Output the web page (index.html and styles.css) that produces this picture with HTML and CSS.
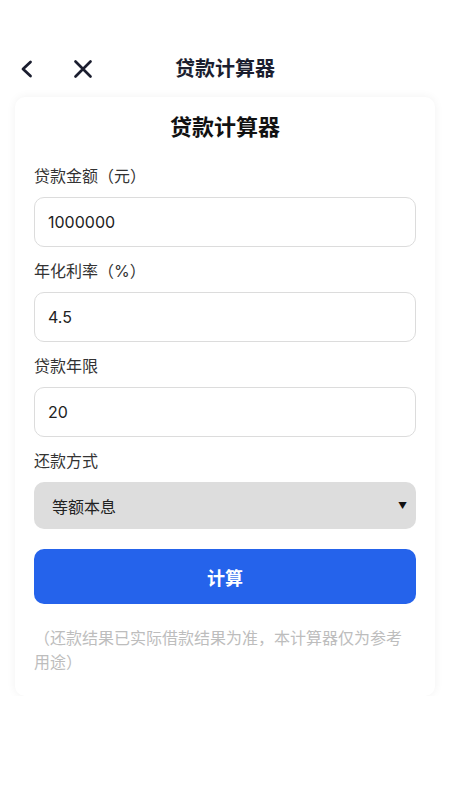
FILE: index.html
```html
<!DOCTYPE html>
<html lang="zh-CN">
<head>
<meta charset="utf-8">
<meta name="viewport" content="width=device-width, initial-scale=1">
<title>贷款计算器</title>
<link rel="stylesheet" href="styles.css">
</head>
<body>
<header class="topbar">
  <div class="nav-icons">
    <svg class="icon-back" width="16" height="20" viewBox="0 0 16 20" aria-hidden="true"><path d="M12.5 3 L5 10 L12.5 17" fill="none" stroke="currentColor" stroke-width="2.8" stroke-linecap="round" stroke-linejoin="round"/></svg>
    <svg class="icon-close" width="20" height="20" viewBox="0 0 20 20" aria-hidden="true"><path d="M2.5 2.5 L17.5 17.5 M17.5 2.5 L2.5 17.5" fill="none" stroke="currentColor" stroke-width="2.7" stroke-linecap="round"/></svg>
  </div>
  <div class="topbar-title">贷款计算器</div>
  <div class="spacer"></div>
</header>

<main class="card">
  <h1 class="card-title">贷款计算器</h1>

  <div class="field">
    <div class="label">贷款金额（元）</div>
    <div class="input">1000000</div>
  </div>
  <div class="field">
    <div class="label">年化利率（%）</div>
    <div class="input">4.5</div>
  </div>
  <div class="field">
    <div class="label">贷款年限</div>
    <div class="input">20</div>
  </div>
  <div class="field">
    <div class="label">还款方式</div>
    <div class="select"><span>等额本息</span><span class="caret">▼</span></div>
  </div>

  <button class="btn" type="button">计算</button>

  <p class="note">（还款结果已实际借款结果为准，本计算器仅为参考用途）</p>
</main>
</body>
</html>
```

FILE: styles.css
```css
* { box-sizing: border-box; }
html, body { margin: 0; padding: 0; background: #ffffff; }
body {
  font-family: Inter, "Noto Sans CJK SC", sans-serif;
  color: #222;
  text-spacing-trim: space-all;
}
.topbar {
  display: grid;
  grid-template-columns: 1fr auto 1fr;
  align-items: center;
  height: 50px;
  margin-top: 44px;
  padding: 0 18px;
  color: #1b1e2f;
}
.nav-icons {
  display: flex;
  align-items: center;
  gap: 39px;
}
.icon-back, .icon-close { display: block; }
.topbar-title {
  font-size: 20px;
  font-weight: 700;
  line-height: 28px;
}
.card {
  margin: 3px 15px 0;
  width: 420px;
  padding: 14px 19px 22px;
  background: #fff;
  border-radius: 10px;
  box-shadow: 0 0 10px rgba(0,0,0,0.06);
}
.card-title {
  margin: 0 0 21px;
  text-align: center;
  font-size: 22px;
  line-height: 32px;
  font-weight: 700;
  color: #111;
}
.field { margin-bottom: 12px; }
.label {
  font-size: 16px;
  line-height: 24px;
  color: #333;
  margin-bottom: 9px;
}
.input {
  height: 50px;
  border: 1.5px solid #dcdcdc;
  border-radius: 10px;
  padding: 0 13px;
  display: flex;
  align-items: center;
  font-size: 16px;
  color: #222;
}
.select {
  height: 47px;
  background: #dddddd;
  border-radius: 10px;
  padding: 0 9px 0 18px;
  display: flex;
  align-items: center;
  justify-content: space-between;
  font-size: 16px;
  color: #222;
}
.caret { font-size: 9px; color: #111; }
.btn {
  display: block;
  width: 100%;
  height: 55px;
  margin-top: 20px;
  border: 0;
  border-radius: 10px;
  background: #2563eb;
  color: #fff;
  font-family: inherit;
  font-size: 18px;
  font-weight: 700;
}
.note {
  margin: 22px 0 0;
  font-size: 16px;
  line-height: 24px;
  color: #bdbdbd;
}
```
